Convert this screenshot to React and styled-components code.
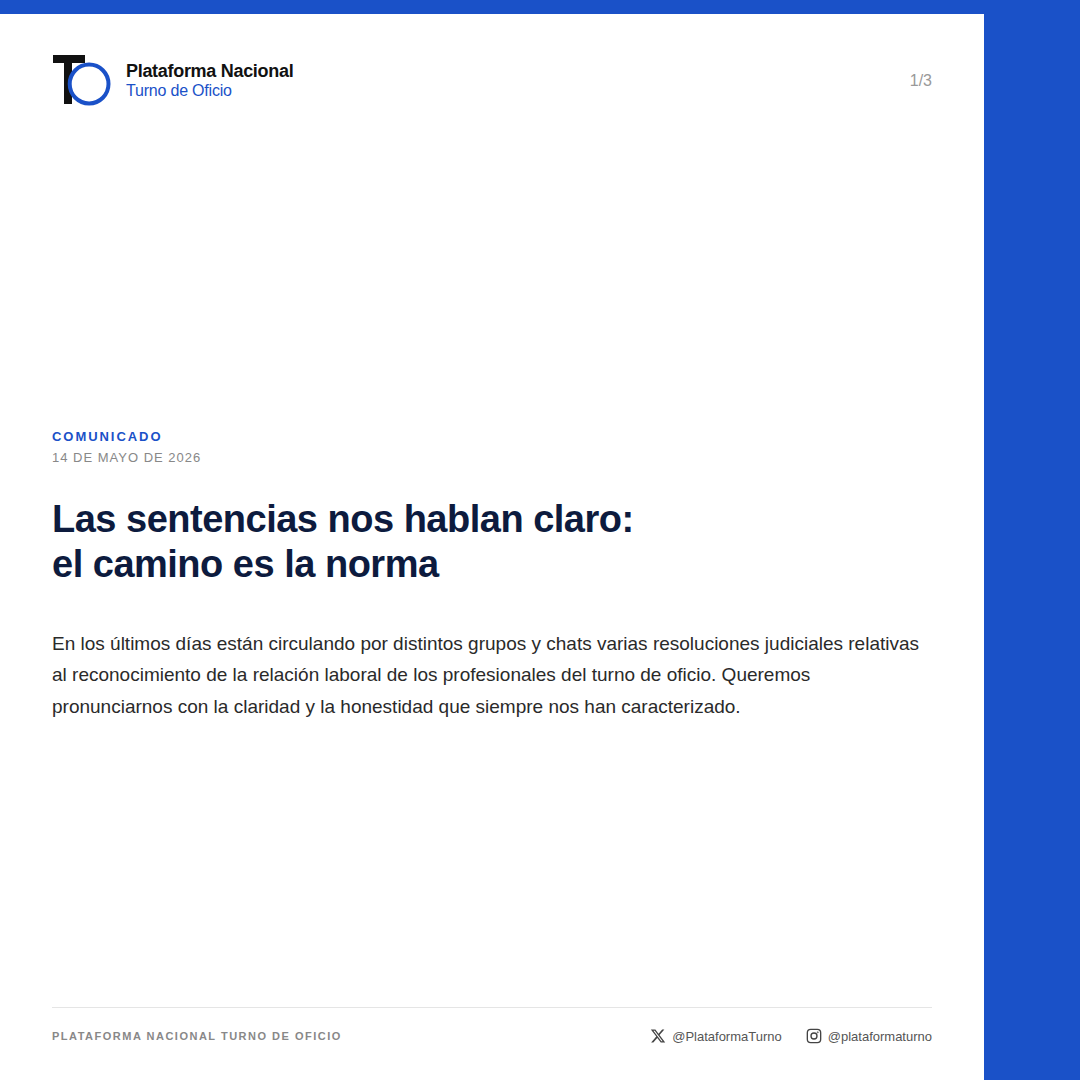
import React from "react";
import styled, { createGlobalStyle } from "styled-components";

const Global = createGlobalStyle`
  html, body { margin: 0; padding: 0; background: #1a51c8; }
  * { box-sizing: border-box; }
`;
const Page = styled.div`
  width: 1080px; height: 1080px; background: #1a51c8; padding-top: 14px;
  font-family: "Liberation Sans", Arial, sans-serif; overflow: hidden;
`;
const Card = styled.main`
  width: 984px; height: 1066px; background: #fff;
  padding: 40px 52px 36px; display: flex; flex-direction: column;
`;
const Header = styled.header`
  display: flex; justify-content: space-between; align-items: center; height: 52px;
`;
const Brand = styled.div`display: flex; align-items: center; gap: 14px;`;
const BrandText = styled.div`display: flex; flex-direction: column;`;
const BrandName = styled.div`
  font-size: 18px; font-weight: 700; color: #111; letter-spacing: -0.3px; line-height: 20px;
`;
const BrandSub = styled.div`
  font-size: 16px; color: #1a51c8; letter-spacing: -0.2px; line-height: 19px;
`;
const Pager = styled.div`font-size: 16px; color: #999; padding-top: 2px;`;
const Main = styled.section`
  display: flex; flex-direction: column; margin-top: 323px; flex: 1;
`;
const Eyebrow = styled.div`
  font-size: 13px; font-weight: 700; letter-spacing: 1.95px; color: #1a51c8; line-height: 15px;
`;
const DateLine = styled.div`
  font-size: 13px; letter-spacing: 1px; color: #888; line-height: 15px; margin-top: 6px;
`;
const Title = styled.h1`
  margin: 32px 0 0; font-size: 38px; font-weight: 700; line-height: 45px;
  letter-spacing: -0.5px; color: #0d1b3e;
`;
const Body = styled.p`
  margin: 41px 0 0; font-size: 19px; line-height: 31.35px; color: #2a2a2a;
`;
const Footer = styled.footer`
  border-top: 1px solid #e5e5e5; padding-top: 20px;
  display: flex; justify-content: space-between; align-items: center;
`;
const FootLabel = styled.div`
  font-size: 11px; font-weight: 700; letter-spacing: 1.5px; color: #888;
`;
const Socials = styled.div`display: flex; gap: 24px; align-items: center;`;
const Social = styled.div`
  display: flex; align-items: center; gap: 6px; font-size: 13px; color: #555;
`;

const Logo = () => (
  <svg width="60" height="52" viewBox="0 0 60 52" style={{ display: "block" }}>
    <rect x="1" y="1" width="32" height="8" fill="#111" />
    <rect x="12" y="1" width="8" height="49" fill="#111" />
    <circle cx="37.1" cy="30" r="19.4" fill="#fff" stroke="#1a51c8" strokeWidth="4" />
  </svg>
);
const XIcon = () => (
  <svg width="16" height="16" viewBox="0 0 24 24" fill="#444" style={{ display: "block" }}>
    <path d="M18.244 2.25h3.308l-7.227 8.26 8.502 11.24H16.17l-5.214-6.817L4.99 21.75H1.68l7.73-8.835L1.254 2.25H8.08l4.713 6.231zm-1.161 17.52h1.833L7.084 4.126H5.117z" />
  </svg>
);
const IgIcon = () => (
  <svg width="16" height="16" viewBox="0 0 24 24" fill="none" stroke="#444" strokeWidth="2" style={{ display: "block" }}>
    <rect x="2" y="2" width="20" height="20" rx="5" />
    <circle cx="12" cy="12" r="4.5" />
    <circle cx="17.5" cy="6.5" r="0.4" fill="#444" />
  </svg>
);

export default function App() {
  return (
    <Page>
      <Global />
      <Card>
        <Header>
          <Brand>
            <Logo />
            <BrandText>
              <BrandName>Plataforma Nacional</BrandName>
              <BrandSub>Turno de Oficio</BrandSub>
            </BrandText>
          </Brand>
          <Pager>1/3</Pager>
        </Header>
        <Main>
          <Eyebrow>COMUNICADO</Eyebrow>
          <DateLine>14 DE MAYO DE 2026</DateLine>
          <Title>Las sentencias nos hablan claro:<br />el camino es la norma</Title>
          <Body>
            En los últimos días están circulando por distintos grupos y chats varias resoluciones judiciales relativas al reconocimiento de la relación laboral de los profesionales del turno de oficio. Queremos pronunciarnos con la claridad y la honestidad que siempre nos han caracterizado.
          </Body>
        </Main>
        <Footer>
          <FootLabel>PLATAFORMA NACIONAL TURNO DE OFICIO</FootLabel>
          <Socials>
            <Social><XIcon />@PlataformaTurno</Social>
            <Social><IgIcon />@plataformaturno</Social>
          </Socials>
        </Footer>
      </Card>
    </Page>
  );
}
